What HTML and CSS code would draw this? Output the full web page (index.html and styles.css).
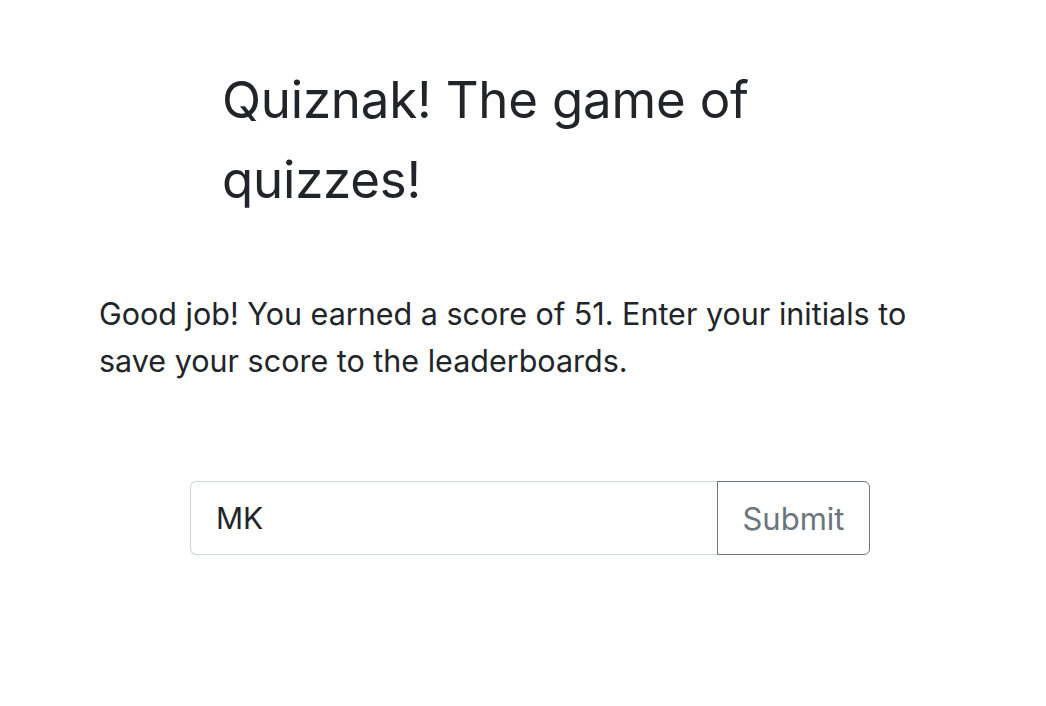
FILE: index.html
```html
<!DOCTYPE html>
<html lang="en">
<head>
<meta charset="utf-8">
<title>Quiznak!</title>
<link rel="stylesheet" href="styles.css">
</head>
<body>
<main class="page">
  <h1 class="title">Quiznak! The game of quizzes!</h1>
  <p class="message">Good job! You earned a score of 51. Enter your initials to save your score to the leaderboards.</p>
  <form class="score-form">
    <input class="initials" type="text" value="MK">
    <button class="submit" type="button">Submit</button>
  </form>
</main>
</body>
</html>
```
FILE: styles.css
```css
html, body {
  margin: 0;
  padding: 0;
  background: #fff;
}
body {
  font-family: Inter, "Liberation Sans", Arial, sans-serif;
  color: #212529;
}
.page {
  padding: 60px 0 0 99px;
}
.title {
  margin: 0 0 70px 123px;
  max-width: 620px;
  font-size: 51px;
  font-weight: 400;
  letter-spacing: -0.2px;
  line-height: 80px;
}
.message {
  margin: 0;
  max-width: 850px;
  font-size: 30.5px;
  line-height: 47px;
}
.score-form {
  display: flex;
  width: 680px;
  height: 74px;
  margin: 97px 0 0 91px;
}
.initials {
  flex: 1;
  min-width: 0;
  box-sizing: border-box;
  height: 74px;
  margin: 0;
  padding: 0 25px;
  border: 1px solid #ced4da;
  border-right: none;
  border-radius: 6px 0 0 6px;
  font-family: inherit;
  font-size: 30px;
  color: #212529;
  outline: none;
}
.submit {
  width: 153px;
  box-sizing: border-box;
  height: 74px;
  margin: 0;
  padding: 0;
  border: 1.5px solid #6c757d;
  border-radius: 0 6px 6px 0;
  background: #fff;
  font-family: inherit;
  font-size: 31px;
  color: #6c757d;
}
```
